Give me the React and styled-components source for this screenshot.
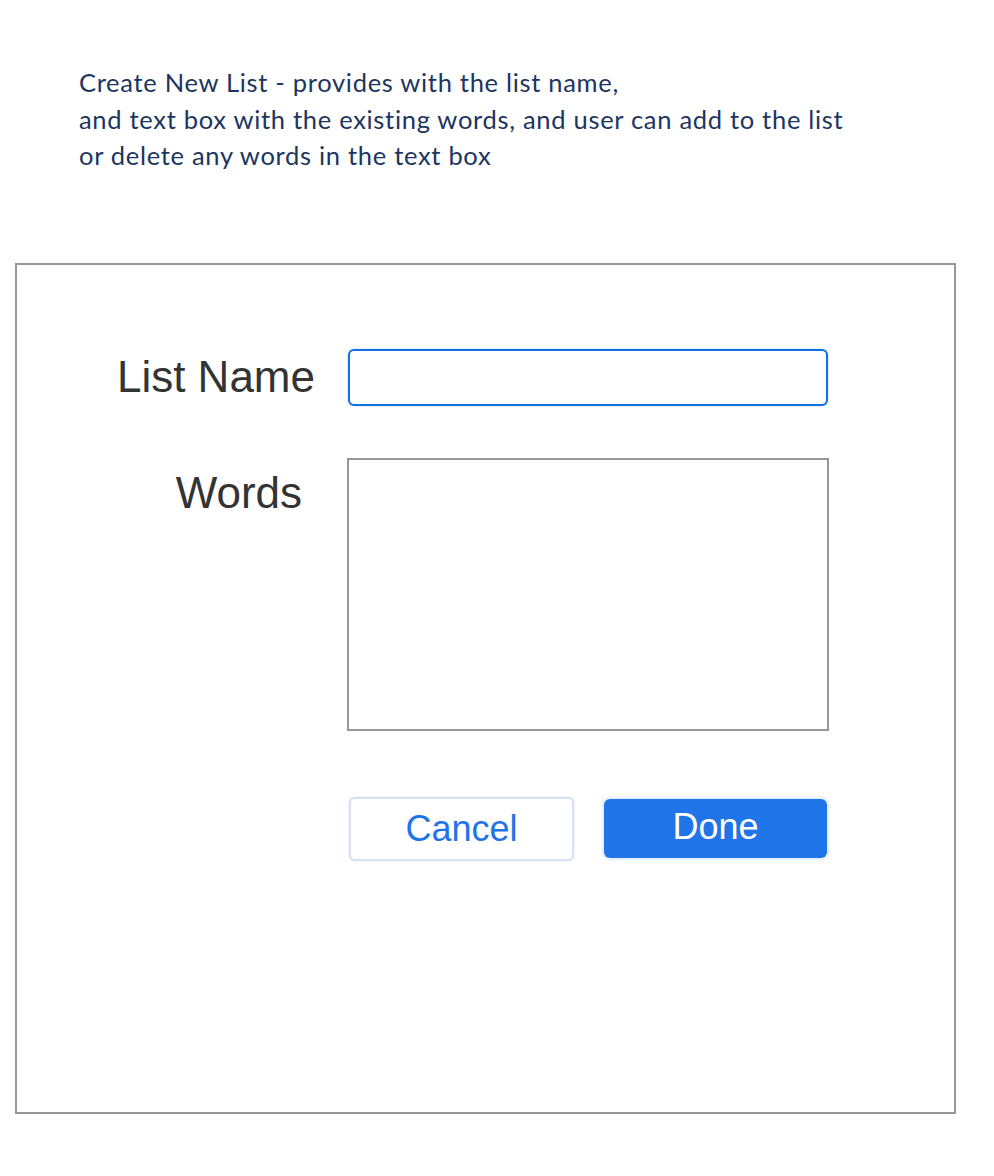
import React, { useState } from "react";
import styled, { createGlobalStyle } from "styled-components";

const GlobalStyle = createGlobalStyle`
  body {
    margin: 0;
    background: #ffffff;
  }
`

const Page = styled.div`
  width: 994px;
  min-height: 1176px;
  padding-top: 64px;
  box-sizing: border-box;
`

const Description = styled.p`
  margin: 0 0 89px 79px;
  font-family: Lato, "Noto Sans", sans-serif;
  font-size: 25.5px;
  letter-spacing: 0.7px;
  line-height: 36.5px;
  color: #1c3561;
`

const Card = styled.div`
  margin-left: 15px;
  width: 941px;
  height: 851px;
  box-sizing: border-box;
  border: 2px solid #979797;
  padding-top: 84px;
`

const Form = styled.form`
  display: grid;
  grid-template-columns: 331px 481px;
  row-gap: 52px;
`

const Label = styled.label`
  justify-self: end;
  align-self: ${p => (p.$top ? "start" : "center")};
  margin-right: ${p => p.$gap}px;
  padding-top: ${p => (p.$top ? "10px" : "0")};
  font-family: "Liberation Sans", Arial, sans-serif;
  font-size: 44px;
  color: #333333;
`

const NameInput = styled.input`
  height: 57px;
  width: 480px;
  box-sizing: border-box;
  border: 2px solid #0f72e0;
  border-radius: 6px;
  box-shadow: 0 0 2px rgba(15, 114, 224, 0.35);
  outline: none;
  padding: 0 12px;
  font-family: "Liberation Sans", Arial, sans-serif;
  font-size: 22px;
`

const WordsBox = styled.textarea`
  width: 482px;
  height: 273px;
  box-sizing: border-box;
  border: 2px solid #979797;
  border-radius: 0;
  resize: none;
  outline: none;
  padding: 10px;
  margin-left: -1px;
  font-family: "Liberation Sans", Arial, sans-serif;
  font-size: 20px;
`

const Buttons = styled.div`
  grid-column: 2;
  display: flex;
  align-items: center;
  gap: 30px;
  margin-top: 14px;
  margin-left: 1px;
`

const Button = styled.button`
  box-sizing: border-box;
  width: ${p => (p.$primary ? "223px" : "225px")};
  height: ${p => (p.$primary ? "59px" : "64px")};
  border-radius: 6px;
  border: ${p => (p.$primary ? "none" : "2px solid #d6e1f3")};
  background: ${p => (p.$primary ? "#1f74e7" : "#ffffff")};
  color: ${p => (p.$primary ? "#ffffff" : "#1f74e7")};
  box-shadow: ${p =>
    p.$primary ? "0 0 3px 2px rgba(31, 116, 231, 0.15)" : "0 0 2px rgba(120, 150, 210, 0.35)"};
  font-family: "Liberation Sans", Arial, sans-serif;
  font-size: 36px;
  padding: 0;
  padding-bottom: ${p => (p.$primary ? "4px" : "0")};
  cursor: pointer;
`

export default function App() {
  const [form, setForm] = useState({ name: "", words: "" })

  const handleChange = event => {
    setForm({ ...form, [event.target.name]: event.target.value })
  }

  return (
    <Page>
      <GlobalStyle />
      <Description>
        Create New List - provides with the list name,
        <br />
        and text box with the existing words, and user can add to the list
        <br />
        or delete any words in the text box
      </Description>
      <Card>
        <Form onSubmit={e => e.preventDefault()}>
          <Label $gap={33}>List Name</Label>
          <NameInput name="name" value={form.name} onChange={handleChange} />
          <Label $gap={46} $top>Words</Label>
          <WordsBox name="words" value={form.words} onChange={handleChange} />
          <Buttons>
            <Button type="button">Cancel</Button>
            <Button type="submit" $primary>Done</Button>
          </Buttons>
        </Form>
      </Card>
    </Page>
  )
}
